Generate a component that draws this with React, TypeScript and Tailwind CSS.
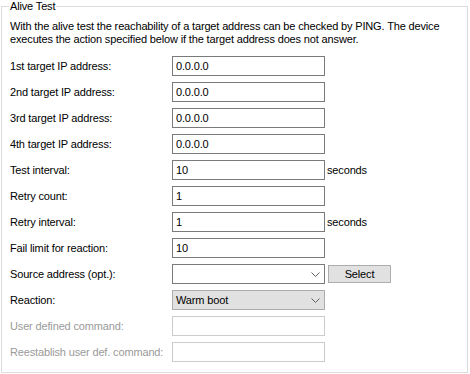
import React from "react";

type Row = {
  label: string;
  kind: "text" | "combo" | "select" | "disabled";
  value?: string;
  suffix?: string;
};

const rows: Row[] = [
  { label: "1st target IP address:", kind: "text", value: "0.0.0.0" },
  { label: "2nd target IP address:", kind: "text", value: "0.0.0.0" },
  { label: "3rd target IP address:", kind: "text", value: "0.0.0.0" },
  { label: "4th target IP address:", kind: "text", value: "0.0.0.0" },
  { label: "Test interval:", kind: "text", value: "10", suffix: "seconds" },
  { label: "Retry count:", kind: "text", value: "1" },
  { label: "Retry interval:", kind: "text", value: "1", suffix: "seconds" },
  { label: "Fail limit for reaction:", kind: "text", value: "10" },
  { label: "Source address (opt.):", kind: "combo" },
  { label: "Reaction:", kind: "select", value: "Warm boot" },
  { label: "User defined command:", kind: "disabled" },
  { label: "Reestablish user def. command:", kind: "disabled" },
];

function Chevron() {
  return (
    <svg width="9" height="5" viewBox="0 0 9 5" className="shrink-0">
      <path d="M0.5 0.5 L4.5 4.5 L8.5 0.5" fill="none" stroke="#606060" strokeWidth="1" />
    </svg>
  );
}

function Field({ row }: { row: Row }) {
  if (row.kind === "combo") {
    return (
      <div className="flex items-center gap-[3px]">
        <div className="flex h-5 w-[153px] items-center justify-end border border-[#7a7a7a] bg-white pr-[4px]">
          <Chevron />
        </div>
        <button className="h-[18px] w-[63px] border border-[#adadad] bg-[#e1e1e1] text-[11px] text-black">
          Select
        </button>
      </div>
    );
  }
  if (row.kind === "select") {
    return (
      <div className="flex h-5 w-[153px] items-center justify-between border border-[#adadad] bg-[#e1e1e1] pl-[3px] pr-[4px]">
        <span>{row.value}</span>
        <Chevron />
      </div>
    );
  }
  if (row.kind === "disabled") {
    return <div className="h-5 w-[153px] border border-[#cccccc] bg-white" />;
  }
  return (
    <div className="flex items-center gap-[2px]">
      <div className="flex h-5 w-[153px] items-center border border-[#7a7a7a] bg-white pl-[3px]">
        {row.value}
      </div>
      {row.suffix && <span>{row.suffix}</span>}
    </div>
  );
}

export default function App() {
  return (
    <div
      className="h-[374px] w-[470px] bg-white pl-[1px] text-[11px] leading-[13px] tracking-[-0.15px] text-black"
      style={{ fontFamily: '"Liberation Sans", Arial, sans-serif' }}
    >
      <fieldset className="h-[373px] w-[467px] border border-[#dcdcdc] p-0">
        <legend className="ml-[7px] px-[1px]">Alive Test</legend>

        <div className="pl-[8px] pt-[7px]">
          {/* Description */}
          <p>
            With the alive test the reachability of a target address can be checked by PING. The device
            <br />
            executes the action specified below if the target address does not answer.
          </p>

          {/* Form rows */}
          <div className="mt-[10px] flex flex-col gap-[6px]">
            {rows.map((row) => (
              <div key={row.label} className="flex items-center">
                <span
                  className={
                    row.kind === "disabled" ? "w-[162px] text-[#9a9a9a]" : "w-[162px]"
                  }
                >
                  {row.label}
                </span>
                <Field row={row} />
              </div>
            ))}
          </div>
        </div>
      </fieldset>
    </div>
  );
}
